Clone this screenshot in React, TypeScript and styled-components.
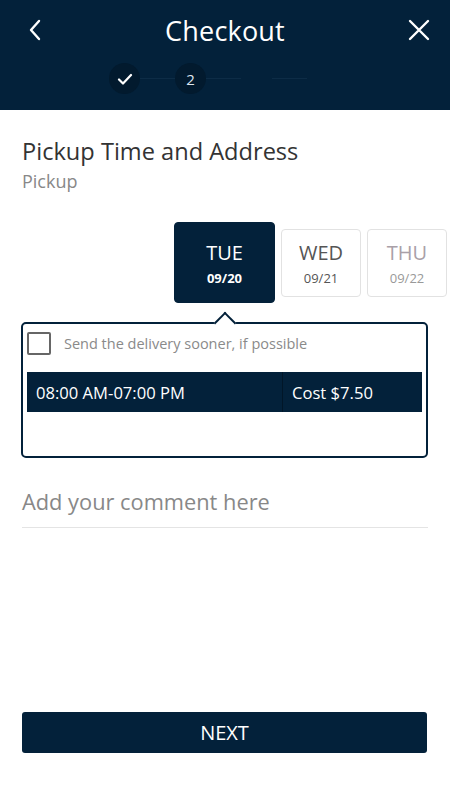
import styled, { createGlobalStyle } from 'styled-components';

const GlobalStyle = createGlobalStyle`
  body {
    margin: 0;
    background: #fff;
    font-family: 'Open Sans', 'Noto Sans', sans-serif;
  }
  * {
    box-sizing: border-box;
  }
`;

const navy = '#03213a';

const Page = styled.div`
  width: 450px;
  height: 800px;
  display: flex;
  flex-direction: column;
  overflow: hidden;
`;

const Header = styled.header`
  background: ${navy};
  height: 110px;
  display: flex;
  flex-direction: column;
  padding: 0 18px 0 22px;
`;

const TopBar = styled.div`
  display: flex;
  align-items: center;
  justify-content: space-between;
  height: 62px;
  padding-bottom: 2px;
`;

const IconButton = styled.button`
  background: none;
  border: 0;
  padding: 0;
  width: 26px;
  height: 26px;
  display: flex;
  align-items: center;
  justify-content: center;
  color: #fff;
`;

const Title = styled.h1`
  margin: 0 0 0 -4px;
  font-size: 27px;
  font-weight: 400;
  color: #fff;
  letter-spacing: 0.2px;
`;

const Stepper = styled.div`
  display: flex;
  align-items: center;
  padding-left: 87px;
  margin-top: 1px;
`;

const Step = styled.div<{ $hidden?: boolean }>`
  width: 31px;
  height: 31px;
  border-radius: 50%;
  background: ${(p) => (p.$hidden ? 'transparent' : '#021a2e')};
  color: #dfe6ee;
  display: flex;
  align-items: center;
  justify-content: center;
  font-size: 15px;
`;

const StepLine = styled.div`
  width: 35px;
  height: 1px;
  background: #0d2c46;
`;

const Content = styled.main`
  flex: 1;
  display: flex;
  flex-direction: column;
  padding: 0 22px;
`;

const SectionTitle = styled.h2`
  margin: 25px 0 0;
  font-size: 23.6px;
  font-weight: 400;
  color: #333;
  line-height: 32px;
`;

const SubTitle = styled.div`
  font-size: 18px;
  color: #888;
  line-height: 24px;
  margin-top: 2px;
`;

const Days = styled.div`
  display: flex;
  align-items: center;
  gap: 6px;
  margin-top: 29px;
  margin-left: 152px;
  margin-right: -19px;
`;

const Day = styled.div<{ $active?: boolean }>`
  width: ${(p) => (p.$active ? '101px' : '80px')};
  height: ${(p) => (p.$active ? '81px' : '68px')};
  border-radius: 4px;
  background: ${(p) => (p.$active ? navy : '#fff')};
  border: 1px solid ${(p) => (p.$active ? navy : '#e2e2e2')};
  display: flex;
  flex-direction: column;
  align-items: center;
  justify-content: center;
  gap: 2px;
  padding-top: 3px;
  color: ${(p) => (p.$active ? '#fff' : '#555')};
  flex-shrink: 0;
`;

const DayName = styled.div<{ $faded?: boolean }>`
  font-size: 20px;
  line-height: 26px;
  color: ${(p) => (p.$faded ? '#a9a0a8' : 'inherit')};
`;

const DayDate = styled.div<{ $active?: boolean; $faded?: boolean }>`
  font-size: 13px;
  line-height: 20px;
  font-weight: ${(p) => (p.$active ? 700 : 400)};
  color: ${(p) => (p.$faded ? '#999' : 'inherit')};
`;

const Panel = styled.div`
  position: relative;
  margin-top: 19px;
  margin-left: -1px;
  height: 136px;
  border: 2px solid ${navy};
  border-radius: 5px;
  padding: 7px 4px 0 4px;
  &::before {
    content: '';
    position: absolute;
    top: -9px;
    left: 194px;
    width: 14px;
    height: 14px;
    background: #fff;
    border-left: 2px solid ${navy};
    border-top: 2px solid ${navy};
    transform: rotate(45deg);
  }
`;

const CheckRow = styled.label`
  display: flex;
  align-items: center;
  gap: 13px;
  height: 24px;
`;

const CheckBox = styled.span`
  width: 24px;
  height: 23px;
  border: 2px solid #666;
  border-radius: 2px;
  flex-shrink: 0;
`;

const CheckText = styled.span`
  font-size: 14.5px;
  color: #8a8a8a;
`;

const Slot = styled.div`
  display: flex;
  margin-top: 17px;
  height: 40px;
  background: ${navy};
  color: #fff;
  font-size: 16.6px;
`;

const SlotCell = styled.div<{ $width?: string }>`
  display: flex;
  align-items: center;
  padding-left: 9px;
  width: ${(p) => p.$width ?? 'auto'};
  flex: ${(p) => (p.$width ? 'none' : '1')};
  border-right: ${(p) => (p.$width ? '1px solid #011628' : 'none')};
`;

const Comment = styled.div`
  margin-top: 28px;
  height: 42px;
  border-bottom: 1px solid #e4e4e4;
  font-size: 21.8px;
  color: #888;
  line-height: 32px;
`;

const Spacer = styled.div`
  flex: 1;
`;

const NextButton = styled.button`
  height: 41px;
  border: 0;
  border-radius: 3px;
  background: ${navy};
  color: #fff;
  font-family: inherit;
  font-size: 20px;
  margin: 0 1px 47px 0;
`;

export default function App() {
  return (
    <>
      <GlobalStyle />
      <Page>
        <Header>
          <TopBar>
            <IconButton aria-label="back">
              <svg width="16" height="24" viewBox="0 0 16 24" fill="none">
                <path d="M12 3L4 12l8 9" stroke="#fff" strokeWidth="2.4" strokeLinecap="round" strokeLinejoin="round" />
              </svg>
            </IconButton>
            <Title>Checkout</Title>
            <IconButton aria-label="close">
              <svg width="24" height="24" viewBox="0 0 24 24" fill="none">
                <path d="M3 3l18 18M21 3L3 21" stroke="#fff" strokeWidth="2.4" strokeLinecap="round" />
              </svg>
            </IconButton>
          </TopBar>
          <Stepper>
            <Step>
              <svg width="16" height="12" viewBox="0 0 16 12" fill="none">
                <path d="M2 6.5l4 4L14 2" stroke="#fff" strokeWidth="2.2" strokeLinecap="round" strokeLinejoin="round" />
              </svg>
            </Step>
            <StepLine />
            <Step>2</Step>
            <StepLine />
            <Step $hidden />
            <StepLine />
          </Stepper>
        </Header>
        <Content>
          <SectionTitle>Pickup Time and Address</SectionTitle>
          <SubTitle>Pickup</SubTitle>
          <Days>
            <Day $active>
              <DayName>TUE</DayName>
              <DayDate $active>09/20</DayDate>
            </Day>
            <Day>
              <DayName>WED</DayName>
              <DayDate>09/21</DayDate>
            </Day>
            <Day>
              <DayName $faded>THU</DayName>
              <DayDate $faded>09/22</DayDate>
            </Day>
          </Days>
          <Panel>
            <CheckRow>
              <CheckBox />
              <CheckText>Send the delivery sooner, if possible</CheckText>
            </CheckRow>
            <Slot>
              <SlotCell $width="256px">08:00 AM-07:00 PM</SlotCell>
              <SlotCell>Cost $7.50</SlotCell>
            </Slot>
          </Panel>
          <Comment>Add your comment here</Comment>
          <Spacer />
          <NextButton>NEXT</NextButton>
        </Content>
      </Page>
    </>
  );
}
